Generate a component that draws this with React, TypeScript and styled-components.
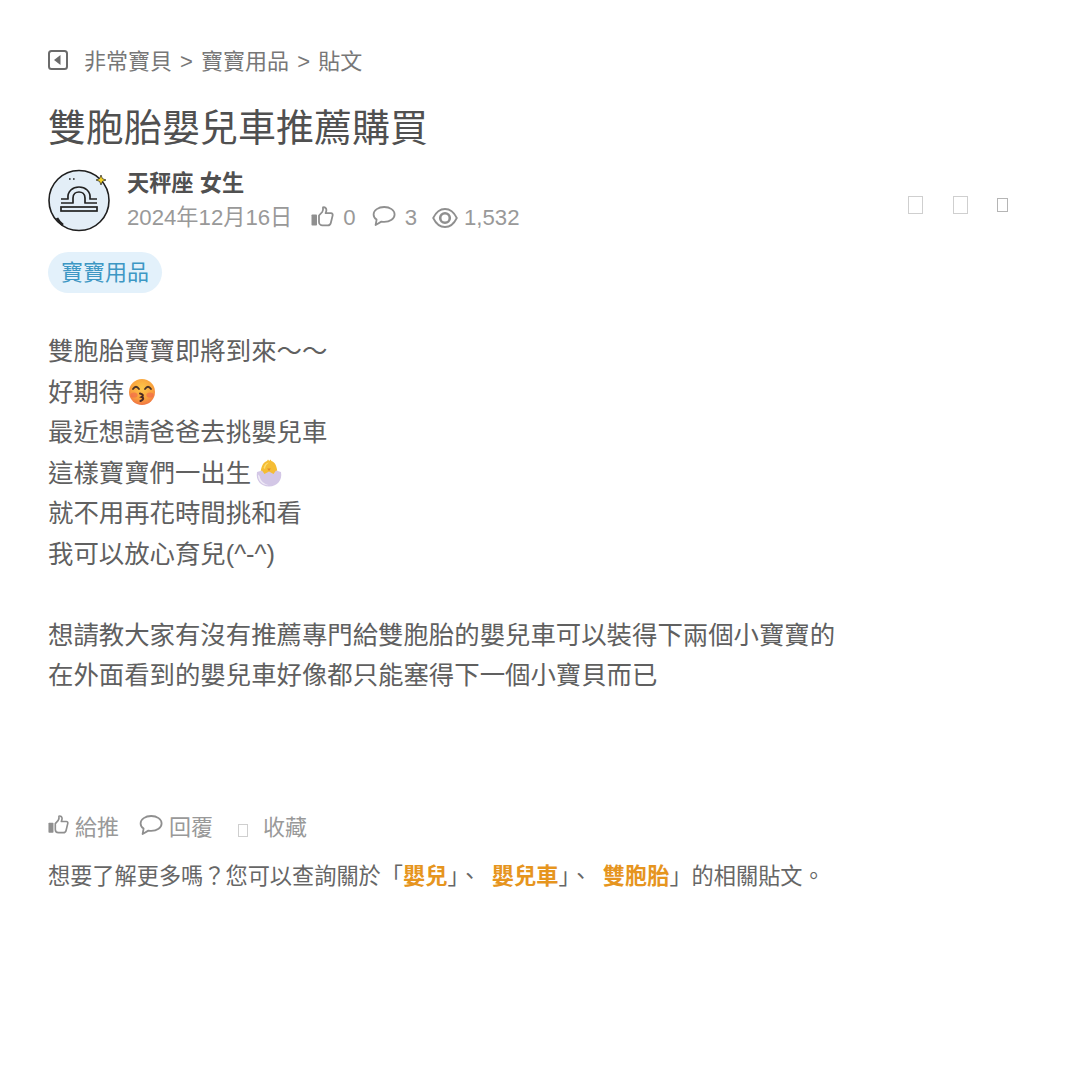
import React, { FC } from 'react';
import styled, { createGlobalStyle } from 'styled-components';

const GlobalStyle = createGlobalStyle`
  html, body {
    margin: 0;
    background: #fff;
    font-family: 'Liberation Sans', 'Noto Sans CJK TC', sans-serif;
    text-spacing-trim: space-all;
  }
`;

const Page = styled.div`
  width: 1080px;
  height: 1080px;
  box-sizing: border-box;
  padding: 47px 48px 0;
  color: #555;
`;

const Breadcrumb = styled.div`
  display: flex;
  align-items: center;
  height: 30px;
  font-size: 22px;
  line-height: 30px;
  word-spacing: 2px;
  color: #777;
`;

const BackIcon = styled.svg`
  width: 20px;
  height: 20px;
  margin: -5px 16px 0 0;
  flex: none;
`;

const Title = styled.h1`
  margin: 25px 0 0;
  font-size: 38px;
  line-height: 52px;
  font-weight: 400;
  color: #505050;
`;

const AuthorRow = styled.div`
  display: flex;
  align-items: flex-start;
  margin-top: 14px;
`;

const Avatar = styled.svg`
  width: 64px;
  height: 64px;
  flex: none;
`;

const AuthorInfo = styled.div`
  margin-left: 15px;
  flex: 1;
`;

const AuthorName = styled.div`
  font-size: 22.2px;
  line-height: 32px;
  font-weight: 700;
  color: #505050;
`;

const Meta = styled.div`
  height: 30px;
  margin-top: 2px;
  line-height: 32px;
  font-size: 22.2px;
  white-space: nowrap;
  color: #999;
  svg {
    vertical-align: -3px;
  }
`;

const MetaDate = styled.span`
  margin-right: 19px;
`;

const MetaCount = styled.span<{ $left: number; $right?: number }>`
  margin: 0 ${p => p.$right || 0}px 0 ${p => p.$left}px;
`;

const ShareTools = styled.div`
  display: flex;
  align-items: center;
  margin: 28px 24px 0 0;
`;

const Tofu = styled.span<{ $w: number; $h: number; $gap?: number; $dark?: boolean }>`
  display: block;
  box-sizing: border-box;
  width: ${p => p.$w}px;
  height: ${p => p.$h}px;
  margin-left: ${p => p.$gap || 0}px;
  border: 1px solid ${p => (p.$dark ? '#b5b5b5' : '#cfcfcf')};
`;

const ActionTofu = styled(Tofu)`
  margin-top: 12px;
`;

const Tag = styled.div`
  display: inline-block;
  margin-top: 20px;
  padding: 0 13px;
  height: 41px;
  line-height: 41px;
  font-size: 22px;
  color: #3d97c4;
  background: #e3f1fb;
  border-radius: 21px;
`;

const Body = styled.div`
  margin-top: 38px;
  font-size: 25.4px;
  line-height: 40.5px;
  color: #606060;
`;

const Line = styled.div`
  display: flex;
  align-items: center;
  height: 40.5px;
  white-space: nowrap;
`;

const Emoji = styled.svg`
  width: 28px;
  height: 28px;
  margin: 0 0 0 4px;
`;

const Actions = styled.div`
  display: flex;
  align-items: center;
  height: 32px;
  margin-top: 113px;
  font-size: 22px;
  color: #999;
`;

const ActionLabel = styled.span<{ $left: number; $right: number }>`
  margin: 0 ${p => p.$right}px 0 ${p => p.$left}px;
`;

const Related = styled.div`
  margin-top: 20px;
  font-size: 22.2px;
  line-height: 32px;
  color: #666;
  white-space: pre;
  text-spacing-trim: normal;
  word-spacing: 5px;
`;

const Keyword = styled.b`
  font-weight: 700;
  color: #e6951e;
`;

const ThumbIcon: FC<{ size?: number }> = ({ size = 23 }) => (
  <svg width={size} height={size} viewBox="0 0 23 23" fill="none">
    <rect x="0.5" y="9.5" width="5.5" height="11" rx="0.8" fill="#8f8f8f" />
    <path
      d="M8 10.5 L11.2 7 C12.2 5.6 12.2 4 12 2.4 C13.8 1.8 15.4 3 15.4 5 C15.4 6.2 15 7.2 14.6 8.2 L20 8.2 C21.4 8.2 22 9.4 21.6 10.6 L19.8 18 C19.4 19.6 18.4 20.4 16.8 20.4 L11.4 20.4 C9.6 20.4 8 19 8 17 Z"
      stroke="#8f8f8f"
      strokeWidth="1.8"
      strokeLinejoin="round"
    />
  </svg>
);

const BubbleIcon: FC = () => (
  <svg width="24" height="24" viewBox="0 -1 24 24" fill="none">
    <path
      d="M12.2 2 C18 2 22.6 5.2 22.6 9.4 C22.6 13.6 18 16.8 12.2 16.8 C11.2 16.8 10.3 16.7 9.4 16.6 L3.6 20 L4.6 14.6 C2.6 13.2 1.6 11.4 1.6 9.4 C1.6 5.2 6.4 2 12.2 2 Z"
      stroke="#8f8f8f"
      strokeWidth="1.8"
      strokeLinejoin="round"
    />
  </svg>
);

const EyeIcon: FC = () => (
  <svg width="26" height="20" viewBox="0 0 26 20" fill="none">
    <path
      d="M1.2 10 C4 4.2 8.2 1 13 1 C17.8 1 22 4.2 24.8 10 C22 15.8 17.8 19 13 19 C8.2 19 4 15.8 1.2 10 Z"
      stroke="#8f8f8f"
      strokeWidth="1.8"
    />
    <circle cx="13" cy="10" r="4.8" stroke="#8f8f8f" strokeWidth="2.6" />
  </svg>
);

const KissEmoji: FC = () => (
  <Emoji viewBox="0 0 28 28">
    <defs>
      <radialGradient id="kissFace" cx="50%" cy="35%" r="70%">
        <stop offset="0%" stopColor="#fdc84a" />
        <stop offset="60%" stopColor="#f9a13c" />
        <stop offset="100%" stopColor="#ee6a45" />
      </radialGradient>
    </defs>
    <circle cx="14" cy="14" r="13" fill="url(#kissFace)" />
    <ellipse cx="6" cy="17" rx="3.6" ry="2.6" fill="#f0644f" opacity="0.6" />
    <ellipse cx="22" cy="17" rx="3.6" ry="2.6" fill="#f0644f" opacity="0.6" />
    <path d="M5 11 Q8 6.5 11 11 M17 11 Q20 6.5 23 11" stroke="#4a3226" strokeWidth="1.8" fill="none" strokeLinecap="round" />
    <path d="M12 15.5 Q17 17 13.5 19 Q17.5 20.5 12.5 23" stroke="#4a2a24" strokeWidth="2" fill="none" strokeLinecap="round" />
  </Emoji>
);

const HatchEmoji: FC = () => (
  <Emoji viewBox="0 0 28 28">
    <path d="M5.5 16 C5.5 7 9 2.5 12 2 L13 0.5 L14.2 2 L15.5 0.5 L16.4 2 C19.5 2.5 22.5 7 22.5 16 Z" fill="#f5bd35" />
    <path d="M8.5 9 C9.5 5.5 11 4 14 3.6 C11.5 5.5 10.4 7 10 10 Z" fill="#fbdc70" />
    <path d="M12.2 9.5 L15.8 9.5 L14 12 Z" fill="#e08a2c" />
    <path d="M2 13 L7 11.5 L9.5 15 L14 12.5 L18.5 15 L21 11.5 L26 13 C27.5 21 22.5 27.5 14 27.5 C5.5 27.5 0.5 21 2 13 Z" fill="#d3c7e6" />
    <path d="M4.6 17 C5.4 21.6 9 25.4 14 26 C8 27 2.8 22.5 3 15.6 Z" fill="#efeaf6" />
  </Emoji>
);

const App: FC = () => {
  return (
    <Page>
      <GlobalStyle />
      <Breadcrumb>
        <BackIcon viewBox="0 0 20 20" fill="none">
          <rect x="1" y="1" width="18" height="18" rx="2.5" stroke="#6b6b6b" strokeWidth="2" />
          <path d="M12.5 5 L12.5 15 L6 10 Z" fill="#6b6b6b" />
        </BackIcon>
        <span>非常寶貝 &gt; 寶寶用品 &gt; 貼文</span>
      </Breadcrumb>
      <Title>雙胞胎嬰兒車推薦購買</Title>
      <AuthorRow>
        <Avatar viewBox="0 0 64 64" fill="none">
          <circle cx="31" cy="32.5" r="30" fill="#e3eef7" stroke="#1f1f1f" strokeWidth="1.6" />
          <path
            d="M13 31 H20 C19 23 25 19 31 19 C37 19 43 23 42 31 H49 M13 35 H25 V30 C25 26 28 24 31 24 C34 24 37 26 37 30 V35 H49"
            stroke="#222"
            strokeWidth="1.7"
            strokeLinejoin="round"
          />
          <rect x="13" y="39" width="36" height="4" fill="#e3eef7" stroke="#222" strokeWidth="1.7" />
          <path d="M53 7 L54.4 10.6 L58 12 L54.4 13.4 L53 17 L51.6 13.4 L48 12 L51.6 10.6 Z" fill="#f5d327" stroke="#222" strokeWidth="0.7" />
          <path d="M9 50 Q11 54 15 57" stroke="#222" strokeWidth="2.6" />
          <path d="M21 11 L22.6 11 M25 11 L26.6 11" stroke="#222" strokeWidth="1.4" />
        </Avatar>
        <AuthorInfo>
          <AuthorName>天秤座 女生</AuthorName>
          <Meta>
            <MetaDate>2024年12月16日</MetaDate>
            <ThumbIcon />
            <MetaCount $left={9} $right={16}>0</MetaCount>
            <BubbleIcon />
            <MetaCount $left={9} $right={15}>3</MetaCount>
            <EyeIcon />
            <MetaCount $left={6}>1,532</MetaCount>
          </Meta>
        </AuthorInfo>
        <ShareTools>
          <Tofu $w={15} $h={18} />
          <Tofu $w={15} $h={18} $gap={30} />
          <Tofu $w={11} $h={14} $gap={29} $dark />
        </ShareTools>
      </AuthorRow>
      <Tag>寶寶用品</Tag>
      <Body>
        <Line>雙胞胎寶寶即將到來～～</Line>
        <Line>
          好期待
          <KissEmoji />
        </Line>
        <Line>最近想請爸爸去挑嬰兒車</Line>
        <Line>
          這樣寶寶們一出生
          <HatchEmoji />
        </Line>
        <Line>就不用再花時間挑和看</Line>
        <Line>我可以放心育兒(^-^)</Line>
        <Line />
        <Line>想請教大家有沒有推薦專門給雙胞胎的嬰兒車可以裝得下兩個小寶寶的</Line>
        <Line>在外面看到的嬰兒車好像都只能塞得下一個小寶貝而已</Line>
      </Body>
      <Actions>
        <ThumbIcon size={21} />
        <ActionLabel $left={6} $right={20}>給推</ActionLabel>
        <BubbleIcon />
        <ActionLabel $left={6} $right={25}>回覆</ActionLabel>
        <ActionTofu $w={10} $h={13} />
        <ActionLabel $left={15} $right={0}>收藏</ActionLabel>
      </Actions>
      <Related>
        想要了解更多嗎？您可以查詢關於「<Keyword>嬰兒</Keyword>」、 <Keyword>嬰兒車</Keyword>」、 <Keyword>雙胞胎</Keyword>」的相關貼文。
      </Related>
    </Page>
  );
};

export default App;
